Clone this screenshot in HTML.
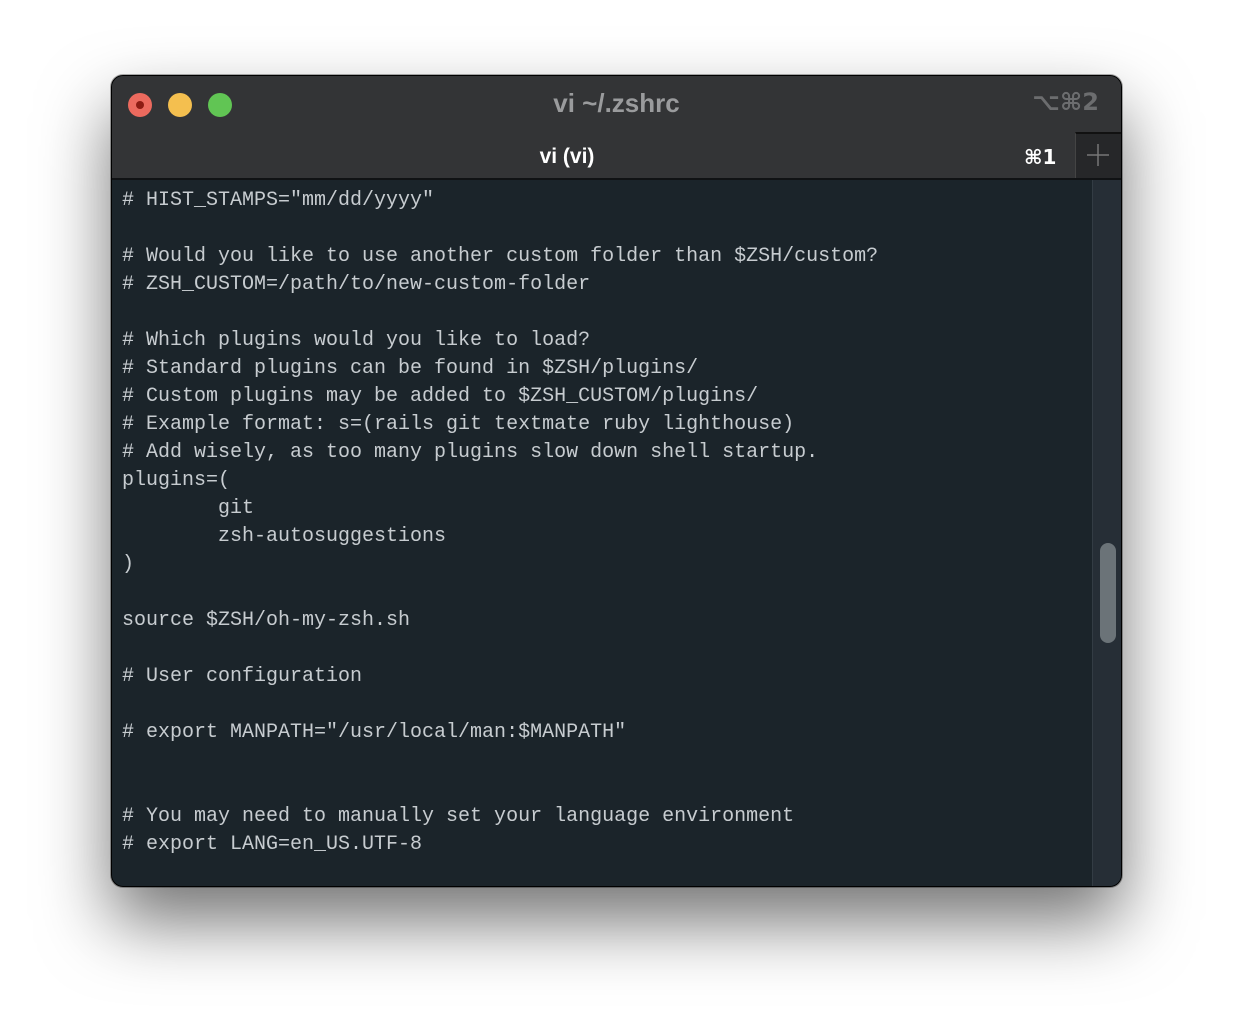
<!DOCTYPE html>
<html><head><meta charset="utf-8"><style>
html,body{margin:0;padding:0;width:1234px;height:1036px;overflow:hidden;background:#fff;}
.win{position:absolute;left:111px;top:75px;width:1009px;height:810px;border:1px solid #000;border-radius:12px;overflow:hidden;background:#1b242a;box-shadow:0 35px 70px rgba(0,0,0,0.55),0 0 0 1px rgba(0,0,0,0.3);}
.title{position:absolute;left:0;top:0;width:100%;height:56px;background:#333436;}
.dot{position:absolute;top:17px;width:24px;height:24px;border-radius:50%;}
.ttext{position:absolute;left:0;width:100%;top:12px;text-align:center;font:bold 26px "Liberation Sans",sans-serif;color:#9a9b9d;}
.kbd{position:absolute;right:22px;top:12px;font:bold 24px "DejaVu Sans","Liberation Sans",sans-serif;color:#6c6d6f;}
.tabs{position:absolute;left:0;top:56px;width:100%;height:46px;background:#333436;}
.tabs .t{position:absolute;left:0;width:910px;top:13px;text-align:center;font:bold 21px "Liberation Sans",sans-serif;color:#fff;}
.tabs .k{position:absolute;left:912px;top:13px;font:bold 20px "DejaVu Sans",sans-serif;color:#fff;}
.plus{position:absolute;left:963px;top:56px;width:46px;height:46px;background:#262729;border-left:1px solid #444;border-top:2px solid #111;box-sizing:border-box;}
.sep{position:absolute;left:0;top:102px;width:100%;height:2px;background:#101214;}
.sb{position:absolute;left:980px;top:104px;width:29px;height:706px;background:#262e36;border-left:1px solid #333c44;}
.thumb{position:absolute;left:988px;top:467px;width:16px;height:100px;border-radius:8px;background:#6b7378;}
pre{position:absolute;left:10px;top:111px;margin:0;font:20px/28px "Liberation Mono",monospace;color:#c7ccd0;}
</style></head><body>
<div class="win">
<div class="title">
<div class="dot" style="left:16px;background:#ec6a5e"><div style="position:absolute;left:8px;top:8px;width:8px;height:8px;border-radius:50%;background:#8d1c13"></div></div>
<div class="dot" style="left:56px;background:#f4bf4f"></div>
<div class="dot" style="left:96px;background:#61c554"></div>
<div class="ttext">vi ~/.zshrc</div>
<div class="kbd">⌥⌘2</div>
</div>
<div class="tabs"><div class="t">vi (vi)</div><div class="k">⌘1</div></div>
<div class="plus"><svg width="46" height="46" style="position:absolute;left:-1px;top:-2px"><path d="M23 12V34M12 23H34" stroke="#777" stroke-width="1.5"/></svg></div>
<div class="sep"></div>
<div class="sb"></div>
<div class="thumb"></div>
<pre># HIST_STAMPS="mm/dd/yyyy"

# Would you like to use another custom folder than $ZSH/custom?
# ZSH_CUSTOM=/path/to/new-custom-folder

# Which plugins would you like to load?
# Standard plugins can be found in $ZSH/plugins/
# Custom plugins may be added to $ZSH_CUSTOM/plugins/
# Example format: s=(rails git textmate ruby lighthouse)
# Add wisely, as too many plugins slow down shell startup.
plugins=(
        git
        zsh-autosuggestions
)

source $ZSH/oh-my-zsh.sh

# User configuration

# export MANPATH="/usr/local/man:$MANPATH"


# You may need to manually set your language environment
# export LANG=en_US.UTF-8</pre>
</div>
</body></html>
